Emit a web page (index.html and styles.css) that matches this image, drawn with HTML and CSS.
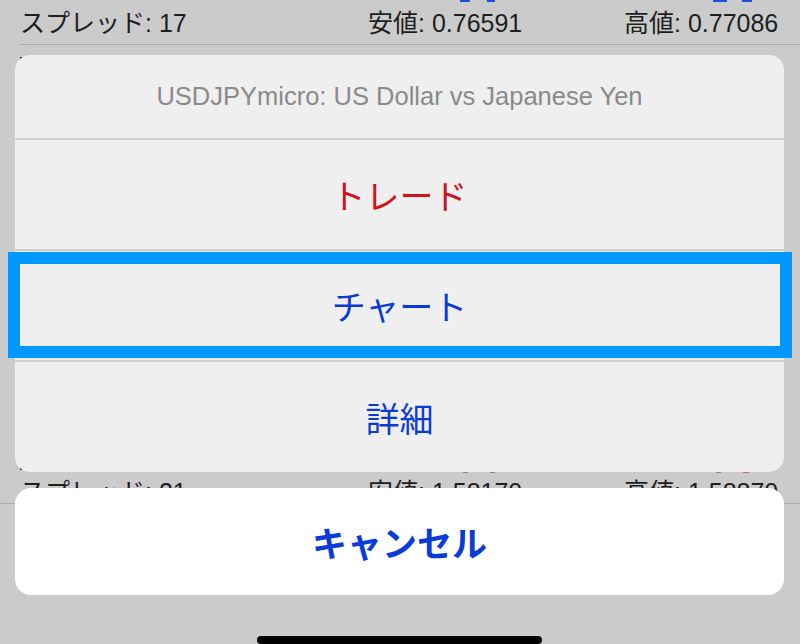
FILE: index.html
```html
<!DOCTYPE html>
<html lang="ja">
<head>
<meta charset="utf-8">
<title>Action sheet</title>
<link rel="stylesheet" href="styles.css">
</head>
<body>
<div class="list">
  <div class="item item-first">
    <div class="strip strip-blue">
      <span class="bit b1"></span><span class="bit b2"></span><span class="bit b3"></span><span class="bit b4"></span>
    </div>
    <div class="stats">
      <span>スプレッド: 17</span>
      <span>安値: 0.76591</span>
      <span>高値: 0.77086</span>
    </div>
  </div>
  <div class="item item-second">
    <div class="symbol-block"></div>
    <div class="strip strip-red">
      <span class="bit b1"></span><span class="bit b2"></span><span class="bit b3"></span><span class="bit b4"></span>
    </div>
    <div class="stats stats-bottom">
      <span>スプレッド: 21</span>
      <span>安値: 1.58170</span>
      <span>高値: 1.58870</span>
    </div>
  </div>
</div>

<div class="overlay">
  <div class="sheet">
    <div class="sheet-title">USDJPYmicro: US Dollar vs Japanese Yen</div>
    <div class="option option-red">トレード</div>
    <div class="option option-focused">チャート<span class="focus-ring"></span></div>
    <div class="option option-last">詳細</div>
  </div>
  <div class="cancel">キャンセル</div>
  <div class="home-indicator"></div>
</div>
</body>
</html>
```

FILE: styles.css
```css
html, body {
  margin: 0;
  padding: 0;
}
body {
  width: 800px;
  height: 644px;
  overflow: hidden;
  background: #cbcbcb;
  position: relative;
  font-family: "Liberation Sans", "Noto Sans CJK JP", sans-serif;
}

/* background list */
.item {
  border-bottom: 1px solid #a9a9a9;
  margin-left: 20px;
}
.item-first {
  height: 44px;
  display: flex;
  flex-direction: column;
}
.item-second {
  height: 458px;
  margin-left: 0;
  display: flex;
  flex-direction: column;
}
.stats {
  display: grid;
  grid-template-columns: 348px 256px auto;
  font-size: 25px;
  color: #1e1e1e;
  line-height: 26px;
  margin-top: 7px;
}
.stats-bottom {
  margin-top: 8px;
  line-height: 21px;
  padding-left: 20px;
}
.strip {
  height: 3px;
  display: flex;
}
.strip-blue .bit { background: #1a4fe0; height: 2px; }
.strip-blue { margin-left: 420px; }
.strip-red { height: 4px; margin-left: 463px; align-items: center; }
.strip-red .bit { background: #e06070; height: 2px; }
.bit { display: block; }
.strip-blue .b1 { width: 10px; margin-left: 20px; }
.strip-blue .b2 { width: 8px; margin-left: 17px; }
.strip-blue .b3 { width: 14px; margin-left: 218px; }
.strip-blue .b4 { width: 10px; margin-left: 15px; }
.strip-red .b1 { width: 5px; }
.strip-red .b2 { width: 5px; margin-left: 22px; }
.strip-red .b3 { width: 5px; margin-left: 221px; }
.strip-red .b4 { width: 6px; margin-left: 22px; }
.symbol-block {
  margin: 12px 0 0 20px;
  width: 300px;
  height: 413px;
  background: #111;
}

/* action sheet overlay */
.overlay {
  position: absolute;
  inset: 0;
  display: flex;
  flex-direction: column;
  padding: 55px 16px 0 15px;
}
.sheet {
  background: #efefef;
  border-radius: 15px;
  position: relative;
}
.sheet-title {
  height: 83px;
  display: flex;
  align-items: center;
  justify-content: center;
  font-family: "Liberation Sans", sans-serif;
  font-size: 25.5px;
  color: #8a8a8a;
  border-bottom: 2px solid #d0d0d0;
}
.option {
  height: 109px;
  display: flex;
  align-items: center;
  justify-content: center;
  font-family: "Noto Sans CJK JP", sans-serif;
  font-size: 34px;
  color: #0b3bd6;
  border-bottom: 2px solid #d0d0d0;
  position: relative;
}
.option-red {
  color: #d4101c;
}
.option-last {
  border-bottom: none;
  height: 110px;
}
.focus-ring {
  position: absolute;
  left: -7px;
  right: -8px;
  top: 1px;
  bottom: 2px;
  border: 12px solid #0098ff;
}
.cancel {
  margin-top: 16px;
  height: 109px;
  background: #ffffff;
  border-radius: 16px;
  display: flex;
  align-items: center;
  justify-content: center;
  font-family: "Noto Sans CJK JP", sans-serif;
  font-weight: 700;
  font-size: 35px;
  color: #0b3bd6;
}
.home-indicator {
  margin: 41px auto 0;
  width: 285px;
  height: 8px;
  border-radius: 4px;
  background: #000;
}
```
